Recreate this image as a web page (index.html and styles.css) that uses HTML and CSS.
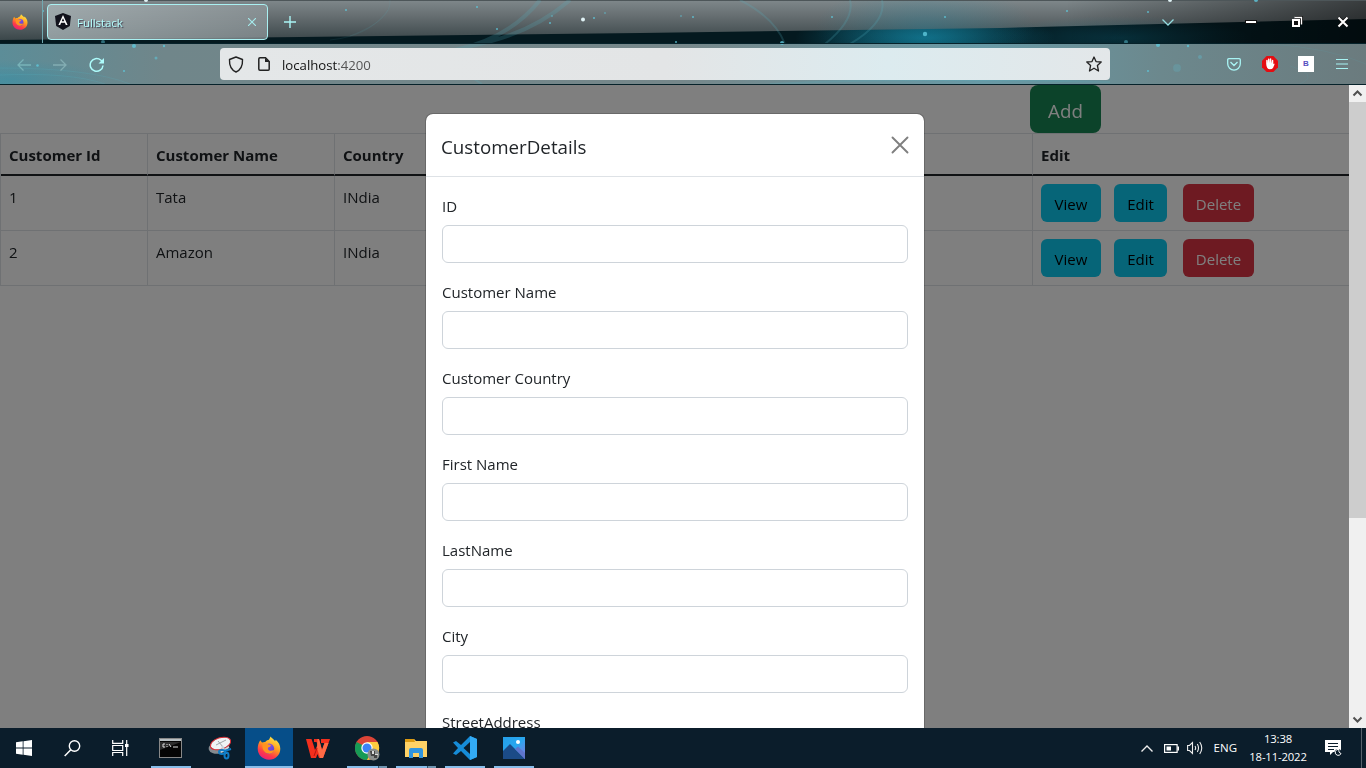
FILE: index.html
```html
<!DOCTYPE html>
<html lang="en">
<head>
<meta charset="utf-8">
<title>Fullstack</title>
<link rel="stylesheet" href="styles.css">
</head>
<body>
<svg width="0" height="0" class="defs">
  <defs>
    <linearGradient id="fxo" x1=".8" y1="0" x2=".3" y2="1"><stop offset="0" stop-color="#fff14a"/><stop offset=".45" stop-color="#ff9a1f"/><stop offset=".75" stop-color="#ff3b47"/><stop offset="1" stop-color="#e81e78"/></linearGradient>
    <linearGradient id="fxp" x1="0" y1="0" x2="1" y2="1"><stop offset="0" stop-color="#9059ff"/><stop offset="1" stop-color="#5b3fc0"/></linearGradient>
    <symbol id="firefox" viewBox="0 0 24 24">
      <path fill="url(#fxo)" d="M3.2 4.2 5 6.6C6 6 7.200 5.800 8.300 5.900 9.200 4.800 10.500 4 12 3.800L13.600.5c1 1.600 3.400 2.700 4.600 4.800l.5-1.600c2.900 2.400 4.600 5.400 4.600 9C23.300 19 18.300 23.700 12 23.700S.7 19 .7 12.800c0-3.300.9-6 2.500-8.600z"/>
      <circle cx="12" cy="12.600" r="5.200" fill="url(#fxp)"/>
      <path fill="#ff9420" d="M5.500 8.500c2-1.700 4.500-1.400 5.700.1 1.300.1 2.400.4 2.800.9-.4 1.400-2.600 1.500-3.100 2.400-.3 1 .5 2.600 2.600 2.800 1.600.1 2.500-.8 3.600-.3-.9 2.300-3.300 3.600-5.800 3.200-3.500-.5-6.500-4.200-5.800-9.100z"/>
    </symbol>
  </defs>
</svg>
<div class="screen">
  <header class="browser">
    <svg class="sky" width="1366" height="85" viewBox="0 0 1366 85">
      <defs>
        <linearGradient id="metal" x1="0" y1="0" x2="0" y2="1"><stop offset="0" stop-color="#7f888b"/><stop offset=".4" stop-color="#666e71"/><stop offset="1" stop-color="#3b474a"/></linearGradient>
        <linearGradient id="bar" x1="0" y1="0" x2="1" y2="0"><stop offset="0" stop-color="#5c8d98"/><stop offset=".12" stop-color="#70868a"/><stop offset=".5" stop-color="#76878a"/><stop offset=".72" stop-color="#689aa6"/><stop offset=".85" stop-color="#6c888d"/><stop offset="1" stop-color="#6b7b7e"/></linearGradient>
        <radialGradient id="glow"><stop offset="0" stop-color="#1590b0" stop-opacity=".75"/><stop offset="1" stop-color="#1590b0" stop-opacity="0"/></radialGradient>
        <linearGradient id="shade" x1="0" y1="0" x2="1" y2="0"><stop offset=".78" stop-color="#000" stop-opacity="0"/><stop offset="1" stop-color="#000" stop-opacity=".55"/></linearGradient>
      </defs>
      <rect width="1366" height="85" fill="#04191f"/>
      <ellipse cx="925" cy="38" rx="130" ry="30" fill="url(#glow)" opacity=".85"/>
      <path d="M0 0H1366V19L1000 28 640 33 300 37 0 40Z" fill="url(#metal)"/>
      <ellipse cx="925" cy="28" rx="110" ry="45" fill="url(#glow)" opacity=".4"/>
      <ellipse cx="1120" cy="38" rx="130" ry="22" fill="url(#glow)" opacity=".3"/>
      <rect width="1366" height="44" fill="url(#shade)"/>
      <rect y="44" width="1366" height="40" fill="url(#bar)"/>
      <ellipse cx="10" cy="80" rx="100" ry="20" fill="url(#glow)" opacity=".4"/>
      <rect width="1366" height="1" fill="#4d5659"/>
      <g fill="none" stroke="#55b5c5" opacity=".2">
        <path d="M0 68Q90 68 130 84M0 75Q70 72 105 84"/>
        <path d="M455 50Q510 38 540 0M470 46Q530 35 570 0" stroke-width="4"/>
        <path d="M740 0Q775 18 785 44M850 0Q855 20 825 44M882 0Q887 22 850 44" stroke-width="2"/>
        <path d="M390 0Q392 20 350 36M330 40Q370 36 388 10M1270 44Q1330 48 1366 64M1290 66Q1320 75 1300 84" opacity=".5"/>
        <path d="M465 72Q475 80 482 84M770 84Q900 77 1110 82" stroke-width="2"/>
      </g>
      <g fill="#5fc8dc" opacity=".8"><circle cx="37.500" cy="65.500" r="1.300"/><circle cx="103" cy="42" r="2" opacity=".6"/><circle cx="134" cy="46" r="2"/><circle cx="164" cy="46" r="1.200"/><circle cx="156" cy="58" r="1.500" opacity=".7"/><circle cx="124" cy="71" r="1"/><circle cx="43" cy="11" r="1"/><circle cx="346" cy="10" r="1"/><circle cx="477" cy="7" r="1"/><circle cx="497" cy="29" r="1"/><circle cx="550" cy="23" r="1"/><circle cx="552" cy="16" r="1" opacity=".6"/><circle cx="594" cy="18" r="1"/><circle cx="605" cy="13" r="1" opacity=".6"/><circle cx="681" cy="16" r="1" opacity=".6"/><circle cx="693" cy="17" r="1"/><circle cx="676" cy="42" r="1"/><circle cx="782" cy="43" r="2"/><circle cx="832" cy="17" r="1"/><circle cx="925" cy="34" r="2.200"/><circle cx="945" cy="17" r="1"/><circle cx="1067" cy="11" r="1"/><circle cx="1148" cy="12" r="1"/><circle cx="1126" cy="42" r="2" opacity=".6"/><circle cx="1158" cy="45" r="2"/><circle cx="1188" cy="46" r="1.200"/><circle cx="1148" cy="71" r="1"/><circle cx="1177" cy="68" r="4" opacity=".25"/><circle cx="1200" cy="57" r="2" opacity=".4"/><circle cx="1256" cy="0" r="2"/></g>
      <g fill="#e0f2f5"><circle cx="583" cy="19.500" r="2"/><circle cx="146" cy="0" r="2"/><circle cx="1170" cy="0" r="2"/></g>
      <path d="M42.500 0V44" stroke="#71a9b1"/>
      <path d="M0 43.500H1366M0 84.500H1366" stroke="#06222a"/>
    </svg>
    <div class="tabs">
      <svg class="fx" width="16" height="16"><use href="#firefox"/></svg>
      <div class="tab">
        <svg width="16" height="17" viewBox="0 0 16 17"><path d="M8 0 16 3 14.800 13 8 17 1.200 13 0 3Z" fill="#12121c"/><path d="M8 2 3.400 12H5.200L6.100 9.700H9.900L10.800 12H12.600ZM8 5.300 9.300 8.300H6.700Z" fill="#fff" fill-rule="evenodd"/></svg>
        <span class="tab-name">Fullstack</span>
        <svg width="8" height="8" viewBox="0 0 8 8"><path d="M0 0 8 8M8 0 0 8" stroke="#a5ecee" stroke-width="1.100"/></svg>
      </div>
      <svg class="plus" width="12" height="12"><path d="M6 0V12M0 6H12" stroke="#a9f5f5" stroke-width="1.400"/></svg>
      <svg class="chevron" width="12" height="7"><path d="M.5.5 6 6 11.500.5" fill="none" stroke="#93dce0" stroke-width="1.300"/></svg>
      <svg class="min" width="12" height="4"><rect x=".5" y=".5" width="11" height="3" fill="#fff" stroke="#111"/></svg>
      <svg class="restore" width="12" height="12"><path d="M4 2H10V8" fill="none" stroke="#111" stroke-width="4"/><path d="M3.500 1.500H10.500V8.500" fill="none" stroke="#fff" stroke-width="1.300"/><rect x="2" y="4" width="6" height="6" fill="#111" stroke="#fff" stroke-width="2"/></svg>
      <svg class="close" width="12" height="12"><path d="M1.500 1.500 10.500 10.500M10.500 1.500 1.500 10.500" stroke="#111" stroke-width="3.500"/><path d="M1.500 1.500 10.500 10.500M10.500 1.500 1.500 10.500" stroke="#fff" stroke-width="2"/></svg>
    </div>
    <div class="toolbar">
      <div class="nav">
        <svg width="14" height="12"><path d="M14 6H1M6.500.5 1 6 6.500 11.500" fill="none" stroke="#78b2b8" stroke-width="1.300"/></svg>
        <svg width="14" height="12"><path d="M0 6H13M7.500.5 13 6 7.500 11.500" fill="none" stroke="#83adb2" stroke-width="1.300"/></svg>
        <svg width="16" height="16" viewBox="0 0 16 16"><path d="M14 8.500A6.400 6.400 0 1 1 11.700 3L14 5" fill="none" stroke="#adfbfb" stroke-width="1.500"/><path d="M15 1V6.500H9.500Z" fill="#adfbfb"/></svg>
      </div>
      <div class="url">
        <svg width="16" height="17" viewBox="0 0 16 17"><path d="M8 1 14.500 3.500C14.800 9.500 12.500 14 8 16 3.500 14 1.200 9.500 1.500 3.500Z" fill="none" stroke="#222" stroke-width="1.400" stroke-linejoin="round"/></svg>
        <svg width="12" height="14" viewBox="0 0 12 14"><path d="M2 .8H7.500L11.200 4.500V12.200Q11.200 13.200 10.200 13.200H2Q.8 13.200.8 12V2Q.8.8 2 .8Z" fill="none" stroke="#222" stroke-width="1.500"/><path d="M7 1V5H11.500Z" fill="#222"/></svg>
        <span class="address">localhost<i>:4200</i></span>
        <svg class="star" width="16" height="16" viewBox="0 0 16 16"><path d="M8 1 10 5.600 15.200 6 11.400 9.500 12.500 15 8 12.200 3.500 15 4.600 9.500.8 6 6 5.600Z" fill="none" stroke="#222" stroke-width="1.300" stroke-linejoin="round"/></svg>
      </div>
      <div class="tools">
        <svg width="14" height="13" viewBox="0 0 14 13"><path d="M1.800.7H12.200Q13.300.7 13.300 1.800V5.800A6.300 6.300 0 0 1 .7 5.800V1.800Q.7.7 1.800.7ZM3.500 4 7 7.500 10.500 4" fill="none" stroke="#a8f4f4" stroke-width="1.300"/></svg>
        <svg width="16" height="16" viewBox="0 0 16 16"><path d="M4.700 0H11.300L16 4.700V11.300L11.300 16H4.700L0 11.300V4.700Z" fill="#e40d12"/><path d="M4.200 8V4.200Q5 3.500 5.600 4.300V7.200L6 2.800Q6.800 2 7.400 2.900V7L7.900 2.400Q8.700 1.800 9.300 2.700V7.500L10 4Q10.900 3.500 11.300 4.300V8L12.300 7.500 12.500 8.500 11 12Q10 13.300 8 13.300 4.500 13.300 4.200 8Z" fill="#fff"/></svg>
        <span class="ext">B</span>
        <svg width="12" height="12"><path d="M0 1.500H12M0 6H12M0 10.500H12" stroke="#a8f4f4" stroke-width="1.200"/></svg>
      </div>
    </div>
  </header>

  <main class="viewport">
    <div class="page">
      <button class="btn add">Add</button>
      <table class="customers">
        <thead><tr><th class="c-id">Customer Id</th><th class="c-name">Customer Name</th><th class="c-country">Country</th><th>Edit</th></tr></thead>
        <tbody>
          <tr><td>1</td><td>Tata</td><td>INdia</td><td class="c-actions"><div class="actions"><button class="btn view">View</button><button class="btn edit">Edit</button><button class="btn delete">Delete</button></div></td></tr>
          <tr><td>2</td><td>Amazon</td><td>INdia</td><td class="c-actions"><div class="actions"><button class="btn view">View</button><button class="btn edit">Edit</button><button class="btn delete">Delete</button></div></td></tr>
        </tbody>
      </table>
    </div>
    <div class="overlay">
      <section class="modal">
        <div class="modal-head">
          <h5>CustomerDetails</h5>
          <svg width="18" height="18" viewBox="0 0 18 18"><path d="M1.500 1.500 16.500 16.500M16.500 1.500 1.500 16.500" stroke="#7f7f7f" stroke-width="1.900" stroke-linecap="round"/></svg>
        </div>
        <form class="modal-body">
          <label>ID</label><input type="text">
          <label>Customer Name</label><input type="text">
          <label>Customer Country</label><input type="text">
          <label>First Name</label><input type="text">
          <label>LastName</label><input type="text">
          <label>City</label><input type="text">
          <label>StreetAddress</label><input type="text">
        </form>
      </section>
      <div class="scrollbar">
        <svg width="17" height="17"><path d="M4.500 10.500 8.500 6.500 12.500 10.500" fill="none" stroke="#505050" stroke-width="2"/></svg>
        <div class="thumb"></div>
        <svg class="down" width="17" height="17"><path d="M4.500 6.500 8.500 10.500 12.500 6.500" fill="none" stroke="#505050" stroke-width="2"/></svg>
      </div>
    </div>
  </main>

  <footer class="taskbar">
    <div class="apps">
      <div class="sys"><svg width="16" height="16" viewBox="0 0 16 16"><path d="M0 2.200 6.700 1.300V7.600H0ZM7.500 1.200 16 0V7.600H7.500ZM0 8.400H6.700V14.700L0 13.800ZM7.500 8.400H16V16L7.500 14.800Z" fill="#fff"/></svg></div>
      <div class="sys"><svg width="17" height="17" viewBox="0 0 17 17"><circle cx="10.500" cy="6" r="5.200" fill="none" stroke="#fff" stroke-width="1.400"/><path d="M6.800 9.800.7 16" stroke="#fff" stroke-width="1.500"/></svg></div>
      <div class="sys"><svg width="17" height="16" viewBox="0 0 17 16"><path d="M.7 0V3.300H10.700V0M.7 16V12.500H10.700V16M.7 5.500H10.700V10.500H.7ZM14.700 0V16" fill="none" stroke="#fff" stroke-width="1.200"/><rect x="13" y="4" width="3.500" height="3" fill="#fff"/></svg></div>
      <div class="app open"><svg width="23" height="20" viewBox="0 0 23 20"><rect x=".5" y=".5" width="22" height="19" fill="#050505" stroke="#888"/><path d="M1 1H22V3H1Z" fill="#b9c0c3"/><path d="M1 4H22L1 12Z" fill="#555" opacity=".5"/><path d="M6 6H4V9H6M8 6V7M8 8V9M10 6 12 9M14 9H19" fill="none" stroke="#ddd"/></svg></div>
      <div class="app"><svg width="24" height="24" viewBox="0 0 24 24"><ellipse cx="11" cy="11" rx="10.500" ry="6.500" transform="rotate(-15 11 11)" fill="#858b90"/><ellipse cx="12.500" cy="7.500" rx="10.500" ry="5.700" transform="rotate(-18 12.500 7.500)" fill="#f0f3f5" stroke="#d82a31"/><path d="M8 9 18 4M10 5 15 11" stroke="#a0a5a8"/><path d="M14 10 18 18M21 11 13 16" stroke="#c7d3dc" stroke-width="2"/><g fill="none" stroke="#0e7dc7" stroke-width="2"><ellipse cx="14" cy="16" rx="3" ry="2"/><ellipse cx="18.500" cy="19.500" rx="2" ry="3"/><path d="M16 15 23 13"/></g></svg></div>
      <div class="app open active"><svg width="24" height="24"><use href="#firefox"/></svg></div>
      <div class="app"><svg width="24" height="19" viewBox="0 0 24 19"><path d="M0 0H5.500L7.500 6 9 11 11.500 6 10.500 3 8 3 8 0H13L16 11 18.500 4H15L15 0H24L17 19H13L11.500 15 10 19H5Z" fill="#f32f1d"/><path d="M11.500 0H13L16 11 18.500 4 22.500 4 17 19H14L11 9Z" fill="#ff6a45"/><path d="M11 9 8 17" stroke="#b81410"/></svg></div>
      <div class="app open grouped chrome"><svg width="25" height="25" viewBox="0 0 25 25"><circle cx="12" cy="12" r="12" fill="#db4437"/><path d="M1.600 6A12 12 0 0 0 12 24L17 14Z" fill="#169b56"/><path d="M12 24A12 12 0 0 0 22.500 6H12L17 15Z" fill="#ffcd40"/><circle cx="12" cy="12" r="5.700" fill="#fff"/><circle cx="12" cy="12" r="4.500" fill="#3b82f6"/><circle cx="18.500" cy="18.500" r="6" fill="#8b8e8c"/><path d="M15 15H20V18H22V22H19V20H16Z" fill="#444"/><path d="M17 15H19V18H17ZM20 18H23V19H20Z" fill="#ddd"/></svg></div>
      <div class="app open grouped"><svg width="22" height="19" viewBox="0 0 22 19"><path d="M0 0H9L11 2H22V18H0Z" fill="#ffd266"/><path d="M0 0H9L10 3H0Z" fill="#dd9b12"/><path d="M4 19V11Q4 9 6 9H16Q18 9 18 11V19H14V14H8V19Z" fill="#3195df"/></svg></div>
      <div class="app open"><svg width="24" height="24" viewBox="0 0 24 24"><path d="M17 0 24 3V21L17 24 8 15 3 19 0 17.500 5 12 0 6.500 3 5 8 9ZM17 6 10.500 12 17 18Z" fill="#168cd8" fill-rule="evenodd"/><path d="M17 0 24 3V21L17 24Z" fill="#33abf5"/></svg></div>
      <div class="app open"><svg width="22" height="22" viewBox="0 0 22 22"><defs><linearGradient id="ph" x1="0" x2="1" y1="0" y2="1"><stop stop-color="#249fe9"/><stop offset=".5" stop-color="#29a7ef"/><stop offset="1" stop-color="#8a72dc"/></linearGradient></defs><rect width="22" height="22" fill="url(#ph)"/><path d="M0 14 7 7 22 22H0Z" fill="#1b4b87"/><path d="M12 12 15 9.500 22 16V22Z" fill="#5f75cd"/><circle cx="15" cy="5" r="2" fill="#fff"/></svg></div>
    </div>
    <div class="tray">
      <svg class="up" width="12" height="7"><path d="M.5 6.500 6 1 11.500 6.500" fill="none" stroke="#eee" stroke-width="1.400"/></svg>
      <svg class="battery" width="15" height="9"><rect x=".6" y=".6" width="12.500" height="7.800" fill="none" stroke="#fff" stroke-width="1.200"/><path d="M2.500 2.500H7V6.500H2.500ZM13.500 2.500H15V6.500H13.500Z" fill="#fff"/></svg>
      <svg class="sound" width="17" height="14" viewBox="0 0 17 14"><path d="M.6 4.500H2.500L5.500 1.500V12.500L2.500 9.500H.6ZM8 5Q9.300 7 8 9M10.300 3Q12.700 7 10.300 11M12.700 1Q16.800 7 12.700 13" fill="none" stroke="#eee" stroke-width="1.100"/></svg>
      <span class="lang">ENG</span>
      <div class="clock"><span>13:38</span><span>18-11-2022</span></div>
      <svg class="note" width="17" height="17" viewBox="0 0 17 17"><path d="M0 0H16V12H8L5 15V12H0Z" fill="#fff"/><path d="M3 3.500H13M3 6.500H13M3 9.500H9" stroke="#0b1d2b"/><circle cx="13" cy="12.500" r="3.500" fill="#0b1d2b"/><path d="M14 9.500A3 3 0 1 0 16 13.500 3 3 0 0 1 14 9.500Z" fill="none" stroke="#fff"/></svg>
      <span class="edge"></span>
    </div>
  </footer>
</div>
</body>
</html>
```
FILE: styles.css
```css
* { box-sizing: border-box; }
body { margin: 0; overflow: hidden; font-family: "Open Sans", "Noto Sans", sans-serif; font-size: 15px; line-height: 24px; color: #212529; }
svg { display: block; flex: none; }
.defs { position: absolute; }
.screen { width: 1366px; height: 768px; display: flex; flex-direction: column; overflow: hidden; }

/* Browser chrome */
.browser { position: relative; height: 85px; flex: none; }
.sky { position: absolute; top: 0; left: 0; }
.tabs { position: relative; height: 44px; display: flex; align-items: center; }
.fx { margin-left: 12px; }
.tab { margin-left: 19px; margin-top: -1px; width: 221px; height: 36px; border: 1px solid #a9f0f1; border-radius: 4px; background: linear-gradient(90deg, rgba(176,187,190,.72), rgba(145,153,156,.72)); display: flex; align-items: center; padding: 0 11px 0 7px; }
.tab-name { margin-left: 6px; padding-top: 2px; flex: 1; font-size: 11.6px; letter-spacing: -.1px; color: #b3fbfb; text-shadow: 1px 1px 1px #334; }
.plus { margin-left: 16px; }
.chevron { margin-left: 866px; }
.min { margin-left: 71px; }
.restore { margin-left: 34px; }
.close { margin-left: 34px; }
.toolbar { position: relative; height: 41px; display: flex; align-items: center; padding-bottom: 1px; }
.nav { width: 220px; padding-left: 17px; display: flex; align-items: center; gap: 22px; padding-top: 1px; }
.url { width: 890px; height: 32px; border-radius: 4px; background: linear-gradient(90deg, #e4e7e8, #e3e5e6 50%, #dcebef 75%, #e3e7e9); display: flex; align-items: center; padding: 0 8px; }
.url svg:nth-child(2) { margin-left: 14px; }
.address { margin-left: 12px; padding-top: 2px; flex: 1; font-size: 13.2px; color: #111; }
.address i { font-style: normal; color: #555; }
.tools { display: flex; align-items: center; padding-left: 117px; }
.tools svg:nth-child(2) { margin-left: 21px; }
.ext { margin: 0 22px 0 20px; width: 16px; height: 16px; background: #fff; color: #5550c0; font: bold 8px/16px "Liberation Sans", sans-serif; text-align: center; }

/* Customer page */
.viewport { position: relative; height: 643px; flex: none; overflow: hidden; }
.page { width: 1349px; }
.btn { display: block; border: 0; border-radius: 6px; height: 38px; padding: 2px 0 0; font: inherit; text-align: center; color: #000; background: #0dcaf0; }
.add { margin-left: 1030px; width: 71px; height: 48px; border-radius: 8px; background: #198754; color: #fff; font-size: 18.75px; padding-top: 3px; }
.customers { width: 1349px; table-layout: fixed; border-collapse: separate; border-spacing: 0; border: solid #dee2e6; border-width: 1px 0 0 1px; }
th, td { padding: 9px 8px 7px; text-align: left; vertical-align: top; border: solid #dee2e6; border-width: 0 1px 1px 0; }
th:last-child, td:last-child { border-right: 0; }
th { height: 42px; border-bottom: 2px solid #212529; }
td { height: 55px; }
.c-actions { padding: 8px; }
.c-id { width: 147px; }
.c-name { width: 187px; }
.c-country { width: 698px; }
.actions { display: flex; }
.view { width: 60px; }
.edit { width: 53px; margin-left: 13px; }
.delete { width: 71px; margin-left: 16px; background: #dc3545; color: #fff; }

/* Dialog */
.overlay { position: absolute; inset: 0; background: rgba(0,0,0,.5); display: flex; justify-content: space-between; }
.modal { width: 500px; height: 720px; margin: 28px 0 0 425px; background: #fff; background-clip: padding-box; border: 1px solid rgba(0,0,0,.175); border-radius: 8px; }
.modal-head { height: 63px; padding: 16px 15px; border-bottom: 1px solid #dee2e6; display: flex; justify-content: space-between; align-items: center; }
h5 { margin: 3px 0 0; font-size: 18.75px; line-height: 30px; font-weight: 400; }
.modal-body { padding: 16px; display: flex; flex-direction: column; }
.modal-body label { height: 24px; padding-top: 1px; margin-bottom: 8px; }
.modal-body input { height: 38px; border: 1px solid #ced4da; border-radius: 6px; margin-bottom: 16px; background: #fff; }
.scrollbar { width: 17px; background: #f0f0f0; display: flex; flex-direction: column; }
.thumb { height: 416px; background: #cdcdcd; }
.down { margin-top: auto; }

/* Taskbar */
.taskbar { height: 40px; flex: none; background: #0b1d2b; display: flex; justify-content: space-between; color: #fff; }
.apps { display: flex; }
.sys { width: 48px; display: flex; align-items: center; justify-content: center; }
.sys:nth-child(3) { margin-right: 2px; }
.app { width: 49px; height: 40px; display: flex; align-items: center; justify-content: center; background: no-repeat bottom; }
.open { background-image: linear-gradient(#87bdea, #87bdea); background-size: 40px 2px; }
.grouped { background-image: linear-gradient(90deg, #87bdea 31px, #365267 31px 32px, #6f94b0 32px); }
.chrome { padding-left: 2px; }
.active { width: 48px; margin-left: 1px; background-color: #064e89; background-size: 100% 2px; }
.tray { display: flex; align-items: center; font-size: 11.5px; }
.battery { margin-left: 11px; }
.sound { margin-left: 8px; }
.lang { margin-left: 10px; }
.clock { width: 60px; margin-left: 11px; display: flex; flex-direction: column; text-align: center; line-height: 18px; font-size: 11.3px; letter-spacing: -.15px; white-space: nowrap; }
.note { margin-left: 17px; }
.edge { width: 1px; height: 40px; margin: 0 4px 0 19px; background: #56626c; }
```
